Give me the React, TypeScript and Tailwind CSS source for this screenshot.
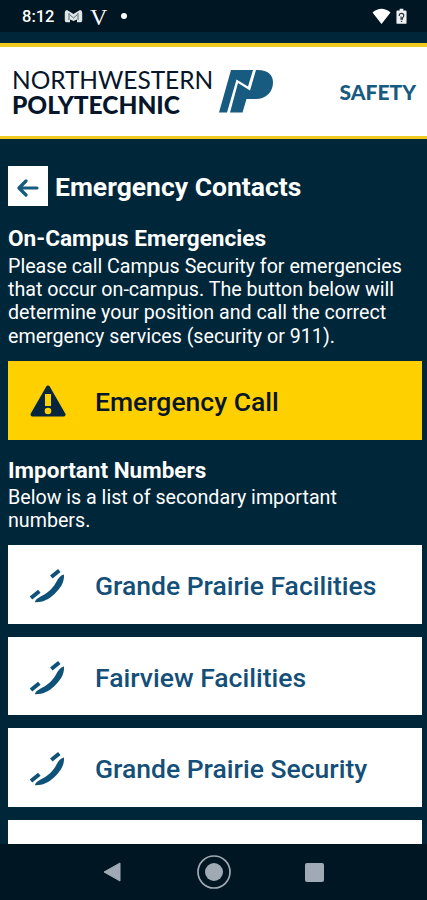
import React from 'react';

const contacts = ['Grande Prairie Facilities', 'Fairview Facilities', 'Grande Prairie Security'];

const StatusBar = () => (
  <div className="flex h-8 shrink-0 items-center bg-[#001622] pl-[22px] pr-[19px] text-white">
    <span className="w-[33px] whitespace-nowrap pt-[2px] text-[16.500px] font-medium leading-8">8:12</span>
    <svg className="ml-[9px] h-[14px] w-[19px]" viewBox="0 0 19 14">
      <path d="M3 1 9.500 5 16 1q2.200 0 2.200 2.500v8q0 1.700-1.500 1.700H13V10.500L9.500 12 6 10.500v2.700H2.300Q.8 13.200.8 11.500v-8Q.8 1 3 1Z" fill="#dfe4e7" />
      <path d="M5 4v7M14 4v7M5.500 5.500 9.500 9 13.500 5.500" fill="none" stroke="#4b5962" strokeWidth=".9" />
    </svg>
    <span className="ml-[7px] w-[18px] pt-px font-['Liberation_Serif'] text-[24px] leading-8">V</span>
    <span className="ml-[13px] size-[6px] rounded-full bg-white" />
    <svg className="ml-auto h-[17px] w-[19px]" viewBox="0 0 19 17">
      <path d="M.5 4.500Q9.500-3 18.500 4.500L9.500 16Z" fill="#fff" />
    </svg>
    <svg className="ml-[5px] mr-px h-[17px] w-[11px]" viewBox="0 0 12 17">
      <path d="M4 0h4v2h2.500q1 0 1 1v12.500q0 1-1 1h-9q-1 0-1-1V3q0-1 1-1H4Z" fill="#eef0f2" />
      <path d="M3.500 8Q3.500 5 6 5t2.500 2.500Q8.500 9 7 10v1.500H5.500V8.500M6 13v1.500" fill="none" stroke="#26343d" strokeWidth="1.300" />
    </svg>
  </div>
);

const Header = () => (
  <header className="mt-[11px] flex h-[96px] shrink-0 items-center border-b-[3px] border-t-4 border-[#efcb20] bg-white pl-3 pr-[11px]">
    <div className="w-[203px] font-[Lato] text-[24.500px] leading-[25px] text-[#07162b]">
      <div className="whitespace-nowrap tracking-[-0.050px]">NORTHWESTERN</div>
      <div className="whitespace-nowrap font-black">POLYTECHNIC</div>
    </div>
    <svg className="ml-1 h-[45px] w-[56px]" viewBox="0 0 56 45">
      <path d="M12 1H34L29 17.500 17.500 10.500 8 43.500H0Z" fill="#185b80" />
      <path d="M37 1H39C49 1 54 6 54 13.500C54 23 47 30 37 30H27.500L23.500 43.500H11L19 14 31 21.500Z" fill="#185b80" />
    </svg>
    <span className="ml-auto font-[Lato] text-[21px] font-black leading-6 text-[#185b80]">SAFETY</span>
  </header>
);

const PhoneIcon = () => (
  <svg className="mt-[2px] h-[36px] w-[36px]" viewBox="0 0 36 36">
    <path d="M35 7.500C35.500 16 31 21.500 25 27.500C19 33 13 35.500 6 35.200C6.500 32.500 8 31.500 13.500 28.500C20 25 24 21 27 15.500C29 11.500 31 8.500 35 7.500Z" fill="#0f5279" />
    <path d="M22.300 10 30.300 3.500M2 31 10.300 24.200" stroke="#0f5279" strokeWidth="4" />
  </svg>
);

const NavBar = () => (
  <nav className="flex h-14 shrink-0 items-center bg-[#001622]">
    <svg className="ml-[103px] h-[20px] w-[18px]" viewBox="0 0 18 20">
      <path d="M17 1v18L1 10Z" fill="#a0aab5" stroke="#a0aab5" strokeLinejoin="round" />
    </svg>
    <svg className="ml-[76px] size-[34px]" viewBox="0 0 34 34">
      <circle cx="17" cy="17" r="16" fill="none" stroke="#a0aab5" strokeWidth="1.700" />
      <circle cx="17" cy="17" r="9" fill="#a0aab5" />
    </svg>
    <span className="ml-[74px] size-[19px] rounded-[2px] bg-[#a0aab5]" />
  </nav>
);

const App = () => {
  return (
    <div className="flex h-[900px] w-[427px] flex-col overflow-hidden bg-[#00263a] font-[Roboto,sans-serif] text-white">
      <StatusBar />
      <Header />

      <main className="min-h-0 flex-1 overflow-hidden pl-2 pr-[5px] pt-[27px]">
        <div className="flex h-10 items-center">
          <button className="flex size-10 items-center justify-center bg-white">
            <svg className="mt-1 h-[18px] w-[22px]" viewBox="0 0 22 18">
              <path d="M20 9H2.500M9 2 2 9l7 7" fill="none" stroke="#185b80" strokeWidth="3.200" strokeLinecap="round" strokeLinejoin="round" />
            </svg>
          </button>
          <h1 className="ml-[7px] mt-[2px] whitespace-nowrap text-[26.500px] font-bold leading-10">Emergency Contacts</h1>
        </div>

        <h2 className="mt-[20px] whitespace-nowrap text-[22.600px] font-bold leading-[26px]">On-Campus Emergencies</h2>
        <p className="mt-[3px] whitespace-nowrap text-[19.650px] leading-[23.200px]">
          Please call Campus Security for emergencies<br />
          that occur on-campus. The button below will<br />
          determine your position and call the correct<br />
          emergency services (security or 911).
        </p>

        <button className="mt-[13px] flex h-[79px] w-full items-center bg-[#ffd000] pl-[22px] text-[#07162b]">
          <svg className="mt-[3px] h-[33px] w-[36px]" viewBox="0 0 36 33">
            <path d="M18 2.500 33.500 29.500H2.500Z" fill="#06263d" stroke="#06263d" strokeWidth="4" strokeLinejoin="round" />
            <path d="M15 9h6v12h-6Z" fill="#ffd000" />
            <circle cx="18" cy="26" r="3.300" fill="#ffd000" />
          </svg>
          <span className="ml-[29px] mt-[3px] whitespace-nowrap text-[26.500px] font-medium">Emergency Call</span>
        </button>

        <h2 className="mt-[17px] whitespace-nowrap text-[22.500px] font-bold leading-[26px]">Important Numbers</h2>
        <p className="mt-[3px] whitespace-nowrap text-[19.650px] leading-[23.200px]">
          Below is a list of secondary important<br />
          numbers.
        </p>

        <div className="mt-[13px] space-y-[13px]">
          {contacts.map((name) => (
            <button key={name} className="flex h-[78.500px] w-full items-center bg-white pl-[21px] text-[#134f78]">
              <PhoneIcon />
              <span className="ml-[30px] mt-[3px] whitespace-nowrap text-[26.500px] font-medium">{name}</span>
            </button>
          ))}
          <div className="h-[78.500px] bg-white" />
        </div>
      </main>

      <NavBar />
    </div>
  );
};

export default App;
